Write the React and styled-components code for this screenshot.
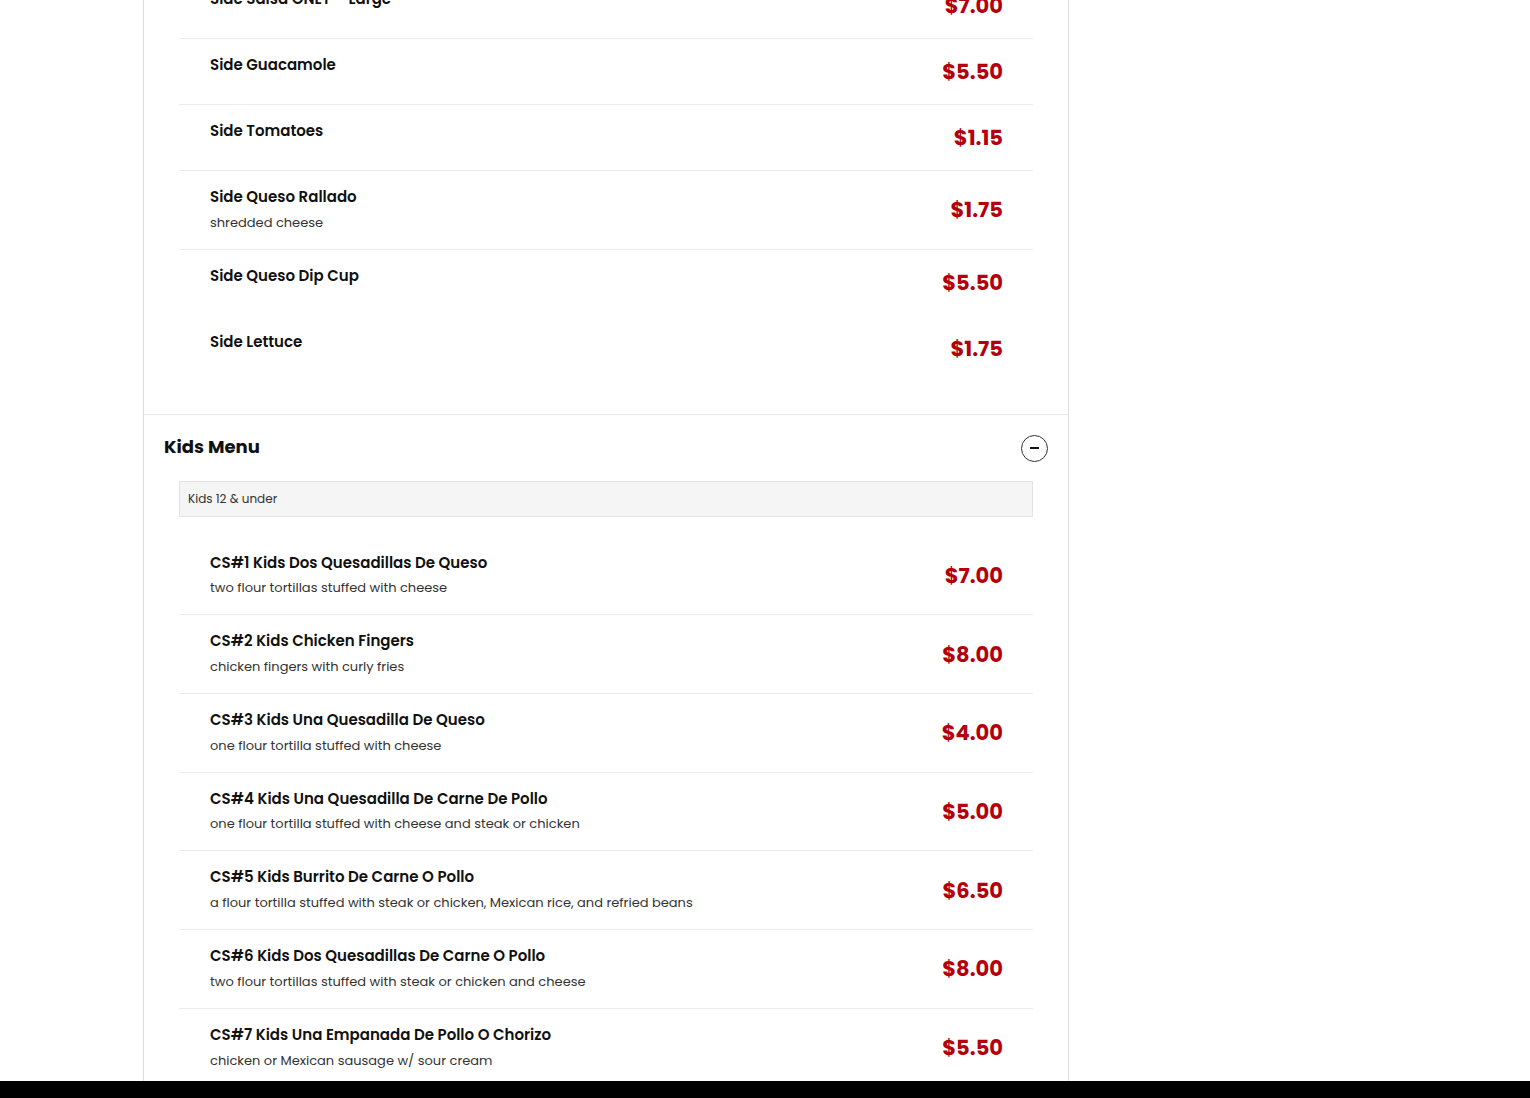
import styled, { createGlobalStyle } from "styled-components";

const GlobalStyle = createGlobalStyle`
  body {
    margin: 0;
    background: #fff;
    font-family: "Poppins", "Open Sans", sans-serif;
    color: #111;
  }
`;

const sides = [
  { name: "Side Salsa ONLY – Large", price: "$7.00" },
  { name: "Side Guacamole", price: "$5.50" },
  { name: "Side Tomatoes", price: "$1.15" },
  { name: "Side Queso Rallado", desc: "shredded cheese", price: "$1.75" },
  { name: "Side Queso Dip Cup", price: "$5.50", last: true },
  { name: "Side Lettuce", price: "$1.75", last: true },
];

const kids = [
  {
    name: "CS#1 Kids Dos Quesadillas De Queso",
    desc: "two flour tortillas stuffed with cheese",
    price: "$7.00",
  },
  {
    name: "CS#2 Kids Chicken Fingers",
    desc: "chicken fingers with curly fries",
    price: "$8.00",
  },
  {
    name: "CS#3 Kids Una Quesadilla De Queso",
    desc: "one flour tortilla stuffed with cheese",
    price: "$4.00",
  },
  {
    name: "CS#4 Kids Una Quesadilla De Carne De Pollo",
    desc: "one flour tortilla stuffed with cheese and steak or chicken",
    price: "$5.00",
  },
  {
    name: "CS#5 Kids Burrito De Carne O Pollo",
    desc: "a flour tortilla stuffed with steak or chicken, Mexican rice, and refried beans",
    price: "$6.50",
  },
  {
    name: "CS#6 Kids Dos Quesadillas De Carne O Pollo",
    desc: "two flour tortillas stuffed with steak or chicken and cheese",
    price: "$8.00",
  },
  {
    name: "CS#7 Kids Una Empanada De Pollo O Chorizo",
    desc: "chicken or Mexican sausage w/ sour cream",
    price: "$5.50",
  },
];

function MenuItem({ item }) {
  return (
    <Row $last={item.last}>
      <ItemText>
        <ItemName>{item.name}</ItemName>
        {item.desc && <ItemDesc>{item.desc}</ItemDesc>}
      </ItemText>
      <Price>{item.price}</Price>
    </Row>
  );
}

export default function App() {
  return (
    <>
      <GlobalStyle />
      <Page>
        <Panel>
          <Section $first>
            <ItemList>
              {sides.map((item) => (
                <MenuItem key={item.name} item={item} />
              ))}
            </ItemList>
          </Section>
          <Section>
            <SectionHeader>
              <SectionTitle>Kids Menu</SectionTitle>
              <ToggleButton type="button" aria-label="collapse">
                <MinusBar />
              </ToggleButton>
            </SectionHeader>
            <Note>Kids 12 &amp; under</Note>
            <ItemList $spaced>
              {kids.map((item) => (
                <MenuItem key={item.name} item={item} />
              ))}
            </ItemList>
          </Section>
        </Panel>
      </Page>
      <BottomBar />
    </>
  );
}

const Page = styled.div`
  margin-top: -27px;
  padding-left: 143px;
  width: 926px;
`;

const Panel = styled.div`
  border-left: 1px solid #dcdcdc;
  border-right: 1px solid #dcdcdc;
  min-height: 1200px;
`;

const Section = styled.section`
  border-top: ${(p) => (p.$first ? "none" : "1px solid #e6e6e6")};
  padding: ${(p) => (p.$first ? "0 35px 32px" : "19px 20px 40px")};
`;

const SectionHeader = styled.div`
  display: flex;
  align-items: center;
  justify-content: space-between;
  height: 26px;
`;

const SectionTitle = styled.h2`
  margin: 0;
  font-size: 18px;
  font-weight: 700;
  color: #111;
`;

const ToggleButton = styled.button`
  width: 27px;
  height: 27px;
  border-radius: 50%;
  border: 1px solid #333;
  background: #fff;
  padding: 0;
  display: flex;
  align-items: center;
  justify-content: center;
  margin-top: 3px;
  cursor: pointer;
`;

const MinusBar = styled.span`
  display: block;
  width: 9px;
  height: 2px;
  background: #111;
`;

const Note = styled.div`
  margin: 21px 15px 0;
  height: 34px;
  display: flex;
  align-items: center;
  padding: 0 8px;
  background: #f5f5f5;
  border: 1px solid #e2e2e2;
  font-size: 12px;
  color: #333;
`;

const ItemList = styled.div`
  margin: ${(p) => (p.$spaced ? "20px 15px 0" : "0")};
`;

const Row = styled.div`
  display: flex;
  align-items: center;
  justify-content: space-between;
  padding: 15px 30px 15px 31px;
  border-bottom: 1px solid ${(p) => (p.$last ? "transparent" : "#ececec")};
`;

const ItemText = styled.div`
  align-self: flex-start;
  display: flex;
  flex-direction: column;
`;

const ItemName = styled.div`
  font-size: 15px;
  font-weight: 600;
  line-height: 22px;
  color: #111;
`;

const ItemDesc = styled.div`
  margin-top: 3.7px;
  font-size: 13px;
  line-height: 22px;
  color: #333;
`;

const Price = styled.div`
  font-size: 21px;
  font-weight: 700;
  line-height: 35px;
  color: #b3000c;
`;

const BottomBar = styled.div`
  position: fixed;
  left: 0;
  right: 0;
  bottom: 0;
  height: 17px;
  background: #000;
`;
